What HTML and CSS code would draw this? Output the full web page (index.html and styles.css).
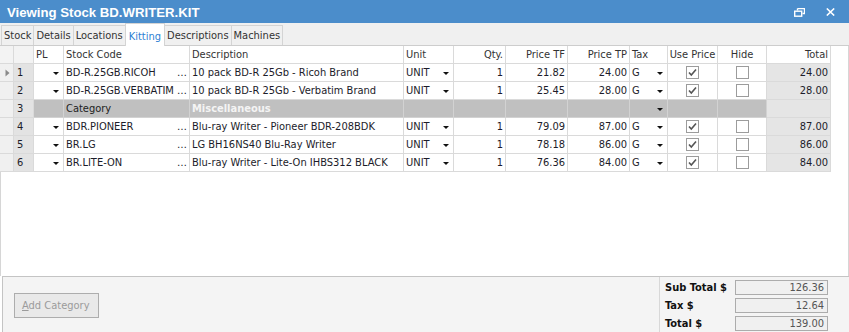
FILE: index.html
```html
<!DOCTYPE html>
<html>
<head>
<meta charset="utf-8">
<link rel="stylesheet" href="styles.css">
</head>
<body>
<div class="window">
  <div class="titlebar">
    <span class="title">Viewing Stock BD.WRITER.KIT</span>
    <div class="controls">
      <svg class="restore" width="11" height="9" viewBox="0 0 11 9"><path d="M3.5 0.5h7v5h-2M3.5 0.5v2" fill="none" stroke="#fff" stroke-width="1.4"/><rect x="0.7" y="3.2" width="7" height="5" fill="none" stroke="#fff" stroke-width="1.4"/></svg>
      <svg class="close" width="9" height="8" viewBox="0 0 9 8"><path d="M0.8 0.5L8.2 7.5M8.2 0.5L0.8 7.5" stroke="#fff" stroke-width="1.6"/></svg>
    </div>
  </div>
  <div class="tabs">
    <div class="tab">Stock</div>
    <div class="tab">Details</div>
    <div class="tab">Locations</div>
    <div class="tab active">Kitting</div>
    <div class="tab">Descriptions</div>
    <div class="tab">Machines</div>
  </div>
  <div class="gridarea">
    <div class="grid">
      <div class="c hd ind"></div><div class="c hd num"></div><div class="c hd">PL</div><div class="c hd">Stock Code</div><div class="c hd">Description</div><div class="c hd">Unit</div><div class="c hd r">Qty.</div><div class="c hd r">Price TF</div><div class="c hd r">Price TP</div><div class="c hd">Tax</div><div class="c hd ctr">Use Price</div><div class="c hd ctr">Hide</div><div class="c hd r">Total</div>

      <div class="c ind"><svg width="5" height="8" viewBox="0 0 5 8"><path d="M0.5 0.5L4.5 4L0.5 7.5Z" fill="#8a8a8a"/></svg></div><div class="c num">1</div><div class="c dd"><i class="arr"></i></div><div class="c code"><span>BD-R.25GB.RICOH</span><span class="ell">…</span></div><div class="c">10 pack BD-R 25Gb - Ricoh Brand</div><div class="c dd sp"><span>UNIT</span><i class="arr"></i></div><div class="c r">1</div><div class="c r">21.82</div><div class="c r">24.00</div><div class="c dd sp"><span>G</span><i class="arr"></i></div><div class="c ctr"><i class="chk on"></i></div><div class="c ctr"><i class="chk"></i></div><div class="c r tot">24.00</div>

      <div class="c ind"></div><div class="c num">2</div><div class="c dd"><i class="arr"></i></div><div class="c code"><span>BD-R.25GB.VERBATIM</span><span class="ell">…</span></div><div class="c">10 pack BD-R 25Gb - Verbatim Brand</div><div class="c dd sp"><span>UNIT</span><i class="arr"></i></div><div class="c r">1</div><div class="c r">25.45</div><div class="c r">28.00</div><div class="c dd sp"><span>G</span><i class="arr"></i></div><div class="c ctr"><i class="chk on"></i></div><div class="c ctr"><i class="chk"></i></div><div class="c r tot">28.00</div>

      <div class="c ind"></div><div class="c num">3</div><div class="c cat"></div><div class="c cat">Category</div><div class="c cat misc">Miscellaneous</div><div class="c cat"></div><div class="c cat"></div><div class="c cat"></div><div class="c cat"></div><div class="c cat dd end"><i class="arr"></i></div><div class="c cat"></div><div class="c cat"></div><div class="c tot"></div>

      <div class="c ind"></div><div class="c num">4</div><div class="c dd"><i class="arr"></i></div><div class="c code"><span>BDR.PIONEER</span><span class="ell">…</span></div><div class="c">Blu-ray Writer - Pioneer BDR-208BDK</div><div class="c dd sp"><span>UNIT</span><i class="arr"></i></div><div class="c r">1</div><div class="c r">79.09</div><div class="c r">87.00</div><div class="c dd sp"><span>G</span><i class="arr"></i></div><div class="c ctr"><i class="chk on"></i></div><div class="c ctr"><i class="chk"></i></div><div class="c r tot">87.00</div>

      <div class="c ind"></div><div class="c num">5</div><div class="c dd"><i class="arr"></i></div><div class="c code"><span>BR.LG</span><span class="ell">…</span></div><div class="c">LG BH16NS40 Blu-Ray Writer</div><div class="c dd sp"><span>UNIT</span><i class="arr"></i></div><div class="c r">1</div><div class="c r">78.18</div><div class="c r">86.00</div><div class="c dd sp"><span>G</span><i class="arr"></i></div><div class="c ctr"><i class="chk on"></i></div><div class="c ctr"><i class="chk"></i></div><div class="c r tot">86.00</div>

      <div class="c ind"></div><div class="c num">6</div><div class="c dd"><i class="arr"></i></div><div class="c code"><span>BR.LITE-ON</span><span class="ell">…</span></div><div class="c">Blu-ray Writer - Lite-On IHBS312 BLACK</div><div class="c dd sp"><span>UNIT</span><i class="arr"></i></div><div class="c r">1</div><div class="c r">76.36</div><div class="c r">84.00</div><div class="c dd sp"><span>G</span><i class="arr"></i></div><div class="c ctr"><i class="chk on"></i></div><div class="c ctr"><i class="chk"></i></div><div class="c r tot">84.00</div>
    </div>
  </div>
  <div class="footer">
    <div class="fleft">
      <button class="btn"><u>A</u>dd Category</button>
    </div>
    <div class="totals">
      <div class="trow"><span class="tl">Sub Total $</span><span class="tv">126.36</span></div>
      <div class="trow"><span class="tl">Tax $</span><span class="tv">12.64</span></div>
      <div class="trow"><span class="tl">Total $</span><span class="tv">139.00</span></div>
    </div>
  </div>
</div>
</body>
</html>
```

FILE: styles.css
```css
* { box-sizing: border-box; }
html, body { margin: 0; padding: 0; background: #fff; }
body {
  font-family: "DejaVu Sans", "Liberation Sans", sans-serif;
  font-stretch: condensed;
  font-size: 11px;
  color: #1c1c2a;
}
.window { width: 849px; height: 332px; display: flex; flex-direction: column; overflow: hidden; }

.titlebar {
  height: 23px; flex: none;
  background: #4b8dcb;
  display: flex; align-items: center; justify-content: space-between;
  padding: 0 14px 0 7px;
}
.title {
  color: #fff; font-weight: bold;
  font-family: "Liberation Sans", Arial, sans-serif; font-stretch: normal;
  font-size: 13.2px; line-height: 23px; padding-top: 1px;
}
.controls { display: flex; align-items: center; gap: 21px; }
.restore { margin-top: 1px; }

.tabs {
  height: 23px; flex: none;
  background: #f0f0f0;
  border-bottom: 1px solid #cdcdcd;
  display: flex; align-items: flex-end;
  padding-left: 1px;
}
.tab {
  height: 20px; line-height: 19px;
  padding: 0 2px 0 2px;
  border: 1px solid #d4d4d4; border-bottom: none;
  margin-right: -1px;
  color: #333;
  background: #f0f0f0;
}
.tab:first-child { padding-left: 2px; }
.tab.active {
  height: 23px; line-height: 25px;
  background: #fff; color: #2d7fd3;
  position: relative; top: 1px; z-index: 1;
  padding: 0 3px 0 3px;
}

.gridarea {
  flex: none; height: 230px;
  border-left: 1px solid #d6d6d6;
  border-right: 1px solid #d6d6d6;
  background: #fff;
}
.grid {
  display: grid;
  width: 830px;
  margin-left: -1px;
  grid-template-columns: 14px 20px 30px 126px 214px 50px 52px 62px 62px 38px 50px 49px 64px;
  grid-template-rows: 18px repeat(6, 18px);
}
.c {
  border-right: 1px solid #dadada;
  border-bottom: 1px solid #dadada;
  white-space: nowrap; overflow: hidden;
  padding: 0 2px;
  line-height: 17px;
  display: flex; align-items: center;
}
.hd { color: #333; background: #fff; }
.r { justify-content: flex-end; }
.ctr { justify-content: center; }
.ind { background: #f0f0f0; padding: 0 0 0 5px; }
.num { background: #e3e3e3; padding-left: 3px; }
.hd.ind, .hd.num { background: #f3f3f3; }
.tot { background: #e5e5e5; }
.code { justify-content: space-between; }
.ell { padding-right: 0; }
.dd { justify-content: flex-end; padding-right: 4px; }
.dd.sp { justify-content: space-between; }
.arr {
  display: block; width: 0; height: 0;
  border-left: 3px solid transparent; border-right: 3px solid transparent;
  border-top: 3px solid #111;
  margin-top: 1px;
}
.cat { background: #c0c0c0; border-color: #d2d2d2; color: #222; }
.misc { color: #f4f4f4; font-weight: bold; }
.chk {
  display: block; width: 13px; height: 13px;
  border: 1px solid #9c9c9c; background: #fff;
}
.chk.on {
  background: #fff url("data:image/svg+xml;utf8,<svg xmlns='http://www.w3.org/2000/svg' width='11' height='11'><path d='M2 5.5L4.3 8L9 2.5' fill='none' stroke='%23555' stroke-width='1.6'/></svg>") no-repeat center;
}

.footer {
  flex: 1;
  display: flex;
  border-top: 1px solid #c4c4c4;
  background: #f4f4f4;
  margin-left: 2px;
  border-left: 1px solid #c4c4c4;
}
.fleft { flex: 1; padding: 16px 0 0 11px; border-right: 1px solid #d8d8d8; }
.btn {
  width: 85px; height: 25px;
  border: 1px solid #adadad; background: #e9e9e9;
  color: #9b9b9b; font: inherit; font-size: 11px;
  text-align: left; padding: 0 0 0 7px;
}
.btn u { text-decoration: underline; }
.totals { width: 189px; padding: 3px 21px 0 5px; display: flex; flex-direction: column; gap: 3px; }
.trow { display: flex; justify-content: space-between; align-items: center; height: 15px; }
.tl { font-weight: bold; color: #111; }
.tv {
  width: 93px; height: 15px;
  border: 1px solid #acacac; background: #f0f0f0;
  text-align: right; color: #555; padding-right: 3px; line-height: 14px;
}
```
